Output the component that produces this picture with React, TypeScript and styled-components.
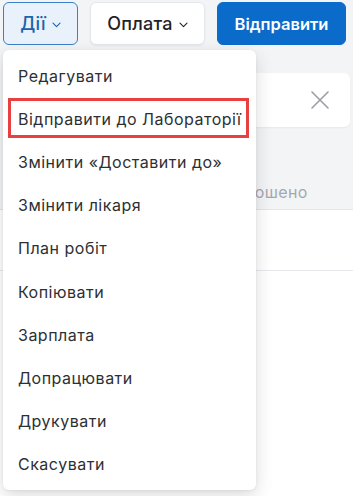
import styled, {createGlobalStyle} from "styled-components";

const GlobalStyle = createGlobalStyle`
  html, body {
    margin: 0;
    padding: 0;
    background: #f3f4f6;
    font-family: Inter, "Noto Sans", "DejaVu Sans", sans-serif;
  }
  * { box-sizing: border-box; }
`;

const Page = styled.div`
  position: relative;
  width: 353px;
  height: 496px;
  overflow: hidden;
  background: #f3f4f6;
`;

const Toolbar = styled.div`
  display: flex;
  align-items: flex-start;
  gap: 12px;
  padding: 2px 0 0 3px;
  height: 50px;
`;

const ToolBtn = styled.button<{$variant: "outline" | "plain" | "primary"; $w: number}>`
  display: flex;
  align-items: center;
  justify-content: center;
  gap: 6px;
  width: ${(p) => p.$w}px;
  height: 43px;
  padding: 0;
  border-radius: 6px;
  font-family: inherit;
  font-size: ${(p) => (p.$variant === "primary" ? 16.5 : 18)}px;
  font-weight: ${(p) => (p.$variant === "primary" ? 600 : 500)};
  letter-spacing: ${(p) => (p.$variant === "primary" ? 0 : 0.2)}px;
  cursor: pointer;
  border: 1px solid
    ${(p) =>
      p.$variant === "outline" ? "#3d7fc6" : p.$variant === "plain" ? "#e4e7eb" : "#0b6bcb"};
  background: ${(p) =>
    p.$variant === "outline" ? "#e9f1fa" : p.$variant === "plain" ? "#ffffff" : "#0b6bcb"};
  color: ${(p) =>
    p.$variant === "outline" ? "#1c63b0" : p.$variant === "plain" ? "#1f2328" : "#ffffff"};
  box-shadow: ${(p) => (p.$variant === "plain" ? "0 1px 2px rgba(0,0,0,0.06)" : "none")};

  svg {
    margin-top: 3px;
  }
`;

const Content = styled.div`
  display: flex;
  flex-direction: column;
`;

const Card = styled.div`
  margin: 23px 3px 0 8px;
  height: 54px;
  background: #ffffff;
  border-radius: 6px;
  box-shadow: 0 1px 2px rgba(0, 0, 0, 0.05);
  display: flex;
  align-items: center;
  justify-content: flex-end;
  padding-right: 20px;
`;

const Details = styled.div`
  height: 83px;
  display: grid;
  grid-template-columns: 1fr 140px;
  align-items: end;
  padding-bottom: 7px;
  border-bottom: 1px solid #e3e5e8;
`;

const Field = styled.div`
  display: flex;
  flex-direction: column;
  gap: 2px;
  padding-left: 2px;
`;

const FieldLabel = styled.span`
  font-size: 12px;
  color: #a3a8b0;
`;

const FieldValue = styled.span`
  font-size: 16px;
  letter-spacing: 0.4px;
  color: #a3a8b0;
`;

const Row = styled.div<{$h: number}>`
  height: ${(p) => p.$h}px;
  background: #ffffff;
  border-bottom: 1px solid #e6e8eb;
`;

const Menu = styled.div`
  position: absolute;
  left: 3px;
  top: 50px;
  width: 253px;
  padding: 4px 0;
  background: #ffffff;
  border-radius: 6px;
  box-shadow: 0 6px 18px rgba(0, 0, 0, 0.14), 0 1px 3px rgba(0, 0, 0, 0.06);
`;

const Item = styled.div<{$active?: boolean}>`
  position: relative;
  height: 43.2px;
  margin: 0 5px;
  padding-left: 10px;
  display: flex;
  align-items: center;
  font-size: 16px;
  letter-spacing: 0.5px;
  color: #2d2f33;
  white-space: nowrap;

  ${(p) =>
    p.$active &&
    `
    &::after {
      content: "";
      position: absolute;
      inset: 1px 2px 2px 0;
      border: 3px solid #e8403f;
    }
  `}
`;

const Chevron = () => (
  <svg width="9" height="6" viewBox="0 0 9 6" fill="none">
    <path d="M1 1.2 4.5 4.6 8 1.2" stroke="currentColor" strokeWidth="1.1" strokeLinecap="round" strokeLinejoin="round" />
  </svg>
);

const CloseIcon = () => (
  <svg width="20" height="20" viewBox="0 0 20 20" fill="none">
    <path d="M2 2 18 18M18 2 2 18" stroke="#9a9ea4" strokeWidth="1.6" strokeLinecap="round" />
  </svg>
);

const items = [
  "Редагувати",
  "Відправити до Лабораторії",
  "Змінити «Доставити до»",
  "Змінити лікаря",
  "План робіт",
  "Копіювати",
  "Зарплата",
  "Допрацювати",
  "Друкувати",
  "Скасувати",
];

const App = () => {
  return (
    <Page>
      <GlobalStyle />
      <Toolbar>
        <ToolBtn $variant="outline" $w={75}>
          Дії <Chevron />
        </ToolBtn>
        <ToolBtn $variant="plain" $w={115}>
          Оплата <Chevron />
        </ToolBtn>
        <ToolBtn $variant="primary" $w={129}>
          Відправити
        </ToolBtn>
      </Toolbar>
      <Content>
        <Card>
          <CloseIcon />
        </Card>
        <Details>
          <div />
          <Field>
            <FieldLabel>Статус</FieldLabel>
            <FieldValue>Запрошено</FieldValue>
          </Field>
        </Details>
        <Row $h={61} />
        <Row $h={240} />
      </Content>
      <Menu>
        {items.map((label, i) => (
          <Item key={label} $active={i === 1}>
            {label}
          </Item>
        ))}
      </Menu>
    </Page>
  );
};
export default App;
